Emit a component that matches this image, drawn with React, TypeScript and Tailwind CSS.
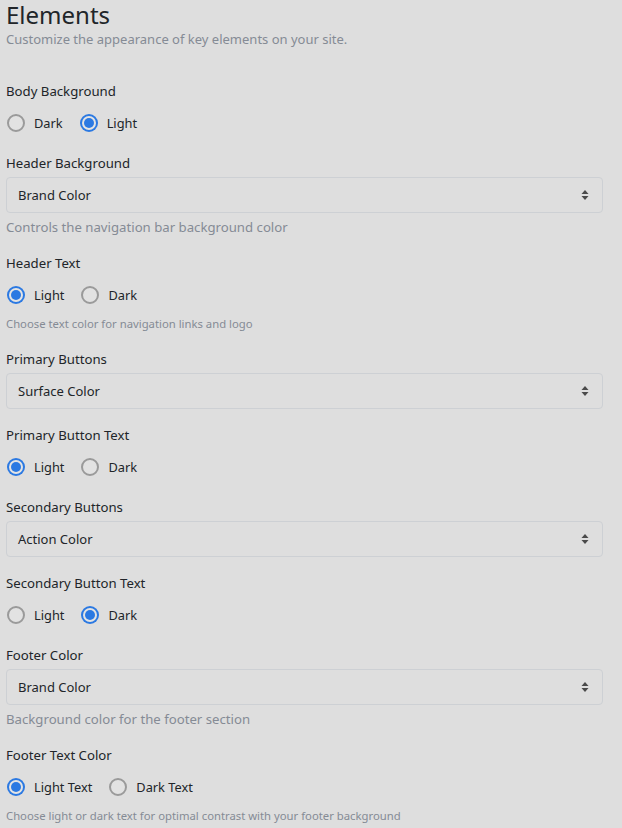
import React from "react";

const font = { fontFamily: '"Noto Sans", "Open Sans", sans-serif' };

function Radio({ label, checked }: { label: string; checked?: boolean }) {
  return (
    <label className="flex items-center gap-[9px] mr-[17px] h-[20px]">
      {checked ? (
        <span className="w-[18px] h-[18px] rounded-full bg-[#2b79e2] flex items-center justify-center">
          <span className="w-[14px] h-[14px] rounded-full bg-[#e4e4e4] flex items-center justify-center">
            <span className="w-[10px] h-[10px] rounded-full bg-[#2b79e2]" />
          </span>
        </span>
      ) : (
        <span className="w-[18px] h-[18px] rounded-full border-2 border-[#9a9a9a] bg-[#e2e2e2]" />
      )}
      <span className="text-[12.8px] leading-[20px] text-[#212529]">{label}</span>
    </label>
  );
}

function RadioGroup({ title, options, sel, help }: { title: string; options: string[]; sel: number; help?: string }) {
  return (
    <div className={help ? "mb-[16px]" : "mb-[20px]"}>
      <div className="text-[13.2px] leading-[20px] h-[20px] text-[#212529] mb-[12px]">{title}</div>
      <div className="flex items-center h-[20px] pl-[1px]">
        {options.map((o, i) => (
          <Radio key={o} label={o} checked={i === sel} />
        ))}
      </div>
      {help && <div className="text-[11.3px] leading-[18px] h-[18px] text-[#858b95] mt-[10px]">{help}</div>}
    </div>
  );
}

function Select({ title, value, help }: { title: string; value: string; help?: string }) {
  return (
    <div className="mb-[16px]">
      <div className="text-[13.2px] leading-[20px] h-[20px] text-[#212529] mb-[4px]">{title}</div>
      <div className="h-[36px] border border-[#cdd0d4] rounded-[4px] bg-[#dedede] flex items-center justify-between pl-[11px] pr-[13px]">
        <span className="text-[13px] leading-[20px] text-[#212529]">{value}</span>
        <svg width="8" height="12" viewBox="0 0 8 12">
          <path d="M4 1 L7.5 5 H0.5 Z" fill="#4a4a4a" />
          <path d="M4 11 L7.5 7 H0.5 Z" fill="#4a4a4a" />
        </svg>
      </div>
      {help && <div className="text-[13.2px] leading-[20px] h-[20px] text-[#858b95] mt-[4px]">{help}</div>}
    </div>
  );
}

export default function App() {
  return (
    <div className="min-h-[828px] w-[622px] bg-[#dedede] pl-[6px] pr-[19px] overflow-hidden" style={font}>
      <h1 className="text-[24px] leading-[28px] text-[#212529] font-normal pt-[1px]">Elements</h1>
      <p className="text-[13px] leading-[20px] text-[#858b95] mb-[32px]">Customize the appearance of key elements on your site.</p>
      <RadioGroup title="Body Background" options={["Dark", "Light"]} sel={1} />
      <Select title="Header Background" value="Brand Color" help="Controls the navigation bar background color" />
      <RadioGroup title="Header Text" options={["Light", "Dark"]} sel={0} help="Choose text color for navigation links and logo" />
      <Select title="Primary Buttons" value="Surface Color" />
      <RadioGroup title="Primary Button Text" options={["Light", "Dark"]} sel={0} />
      <Select title="Secondary Buttons" value="Action Color" />
      <RadioGroup title="Secondary Button Text" options={["Light", "Dark"]} sel={1} />
      <Select title="Footer Color" value="Brand Color" help="Background color for the footer section" />
      <RadioGroup title="Footer Text Color" options={["Light Text", "Dark Text"]} sel={0} help="Choose light or dark text for optimal contrast with your footer background" />
    </div>
  );
}
